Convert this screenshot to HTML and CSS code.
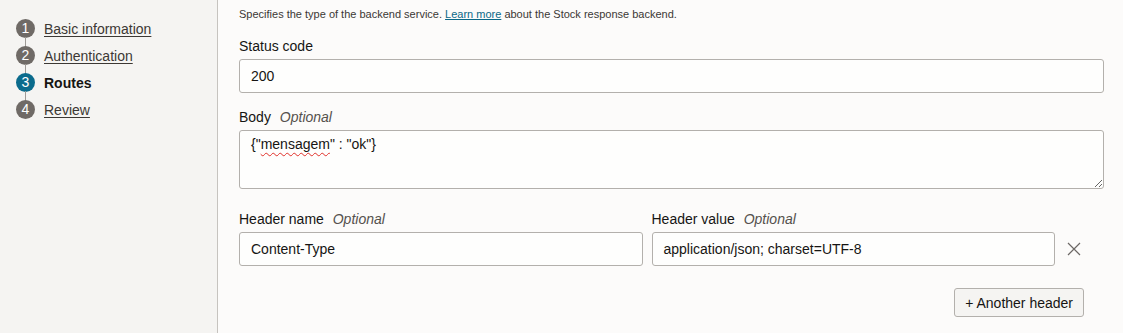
FILE: index.html
```html
<!DOCTYPE html>
<html>
<head>
<meta charset="utf-8">
<link rel="stylesheet" href="styles.css">
</head>
<body>
<div class="page">
  <nav class="sidebar">
    <ol class="steps">
      <li class="step"><span class="num">1</span><a class="step-link" href="#">Basic information</a></li>
      <li class="step"><span class="num">2</span><a class="step-link" href="#">Authentication</a></li>
      <li class="step active"><span class="num">3</span><span class="step-current">Routes</span></li>
      <li class="step"><span class="num">4</span><a class="step-link" href="#">Review</a></li>
    </ol>
  </nav>
  <main class="content">
    <p class="desc">Specifies the type of the backend service. <a href="#" class="link">Learn more</a> about the Stock response backend.</p>

    <div class="field">
      <label class="label">Status code</label>
      <div class="input">200</div>
    </div>

    <div class="field field-body">
      <label class="label">Body <span class="opt">Optional</span></label>
      <div class="textarea">{"<span class="spell">mensagem</span>" : "ok"}</div>
    </div>

    <div class="header-row">
      <div class="field-h">
        <label class="label">Header name <span class="opt">Optional</span></label>
        <div class="input">Content-Type</div>
      </div>
      <div class="field-h">
        <label class="label">Header value <span class="opt">Optional</span></label>
        <div class="input">application/json; charset=UTF-8</div>
      </div>
      <button class="remove" aria-label="Remove">
        <svg width="14" height="14" viewBox="0 0 14 14"><path d="M1 1 L13 13 M13 1 L1 13" stroke="#6c6865" stroke-width="1.2" fill="none"/></svg>
      </button>
    </div>

    <div class="actions">
      <button class="btn">+ Another header</button>
    </div>
  </main>
</div>
</body>
</html>
```

FILE: styles.css
```css
html, body {
  margin: 0;
  padding: 0;
  height: 100%;
}
body {
  font-family: "Liberation Sans", Arial, sans-serif;
  color: #161513;
  background: #fcfbfa;
}
.page {
  display: flex;
  min-height: 333px;
}
.sidebar {
  width: 218px;
  flex: none;
  box-sizing: border-box;
  background: #f5f4f2;
  border-right: 1px solid #c6c3bf;
  padding: 15px 0 0 16px;
}
.steps {
  list-style: none;
  margin: 0;
  padding: 0;
}
.step {
  position: relative;
  display: flex;
  align-items: center;
  height: 27px;
  font-size: 14px;
}
.step:not(:last-child)::after {
  content: "";
  position: absolute;
  left: 9px;
  top: 22px;
  height: 10px;
  width: 1px;
  background: #9e9a96;
}
.num {
  width: 19px;
  height: 19px;
  border-radius: 50%;
  background: #6f6a66;
  color: #fff;
  font-size: 14px;
  line-height: 19px;
  text-align: center;
  margin-right: 9px;
  flex: none;
}
.active .num {
  background: #0b6b8c;
}
.step-link {
  color: #3c3834;
  text-decoration: underline;
  text-underline-offset: 2px;
}
.step-current {
  font-weight: bold;
  color: #161513;
}
.content {
  flex: 1;
  padding: 6px 19px 0 21px;
}
.desc {
  margin: 0;
  font-size: 11px;
  line-height: 16px;
  color: #3b3835;
}
.link {
  color: #0b6887;
  text-decoration: underline;
}
.field {
  margin-top: 16px;
}
.field-body {
  margin-top: 16px;
}
.label {
  display: block;
  font-size: 14px;
  line-height: 17px;
  margin-bottom: 4px;
  color: #161513;
}
.opt {
  font-style: italic;
  color: #55514d;
  margin-left: 5px;
}
.input {
  box-sizing: border-box;
  height: 34px;
  border: 1px solid #b3b0ac;
  border-radius: 3px;
  background: #fefefd;
  font-size: 14px;
  line-height: 32px;
  padding: 0 11px;
  color: #161513;
}
.textarea {
  box-sizing: border-box;
  height: 59px;
  border: 1px solid #b3b0ac;
  border-radius: 3px;
  background: #fefefd;
  font-size: 14px;
  line-height: 17px;
  padding: 5px 11px;
  color: #161513;
  overflow: auto;
  resize: vertical;
}
.spell {
  text-decoration: underline wavy #e0302a;
  text-decoration-thickness: 1px;
  text-underline-offset: 3px;
}
.header-row {
  display: grid;
  grid-template-columns: 1fr 1fr 20px;
  column-gap: 9px;
  align-items: end;
  margin-top: 22px;
  padding-right: 20px;
}
.remove {
  border: none;
  background: none;
  padding: 0;
  height: 34px;
  display: flex;
  align-items: center;
  justify-content: center;
  cursor: pointer;
}
.actions {
  display: flex;
  justify-content: flex-end;
  padding-right: 20px;
  margin-top: 22px;
}
.btn {
  font-family: "Liberation Sans", Arial, sans-serif;
  font-size: 14px;
  color: #161513;
  background: #f5f4f2;
  border: 1px solid #b3b0ac;
  border-radius: 3px;
  height: 29px;
  padding: 0 10px;
}
```
